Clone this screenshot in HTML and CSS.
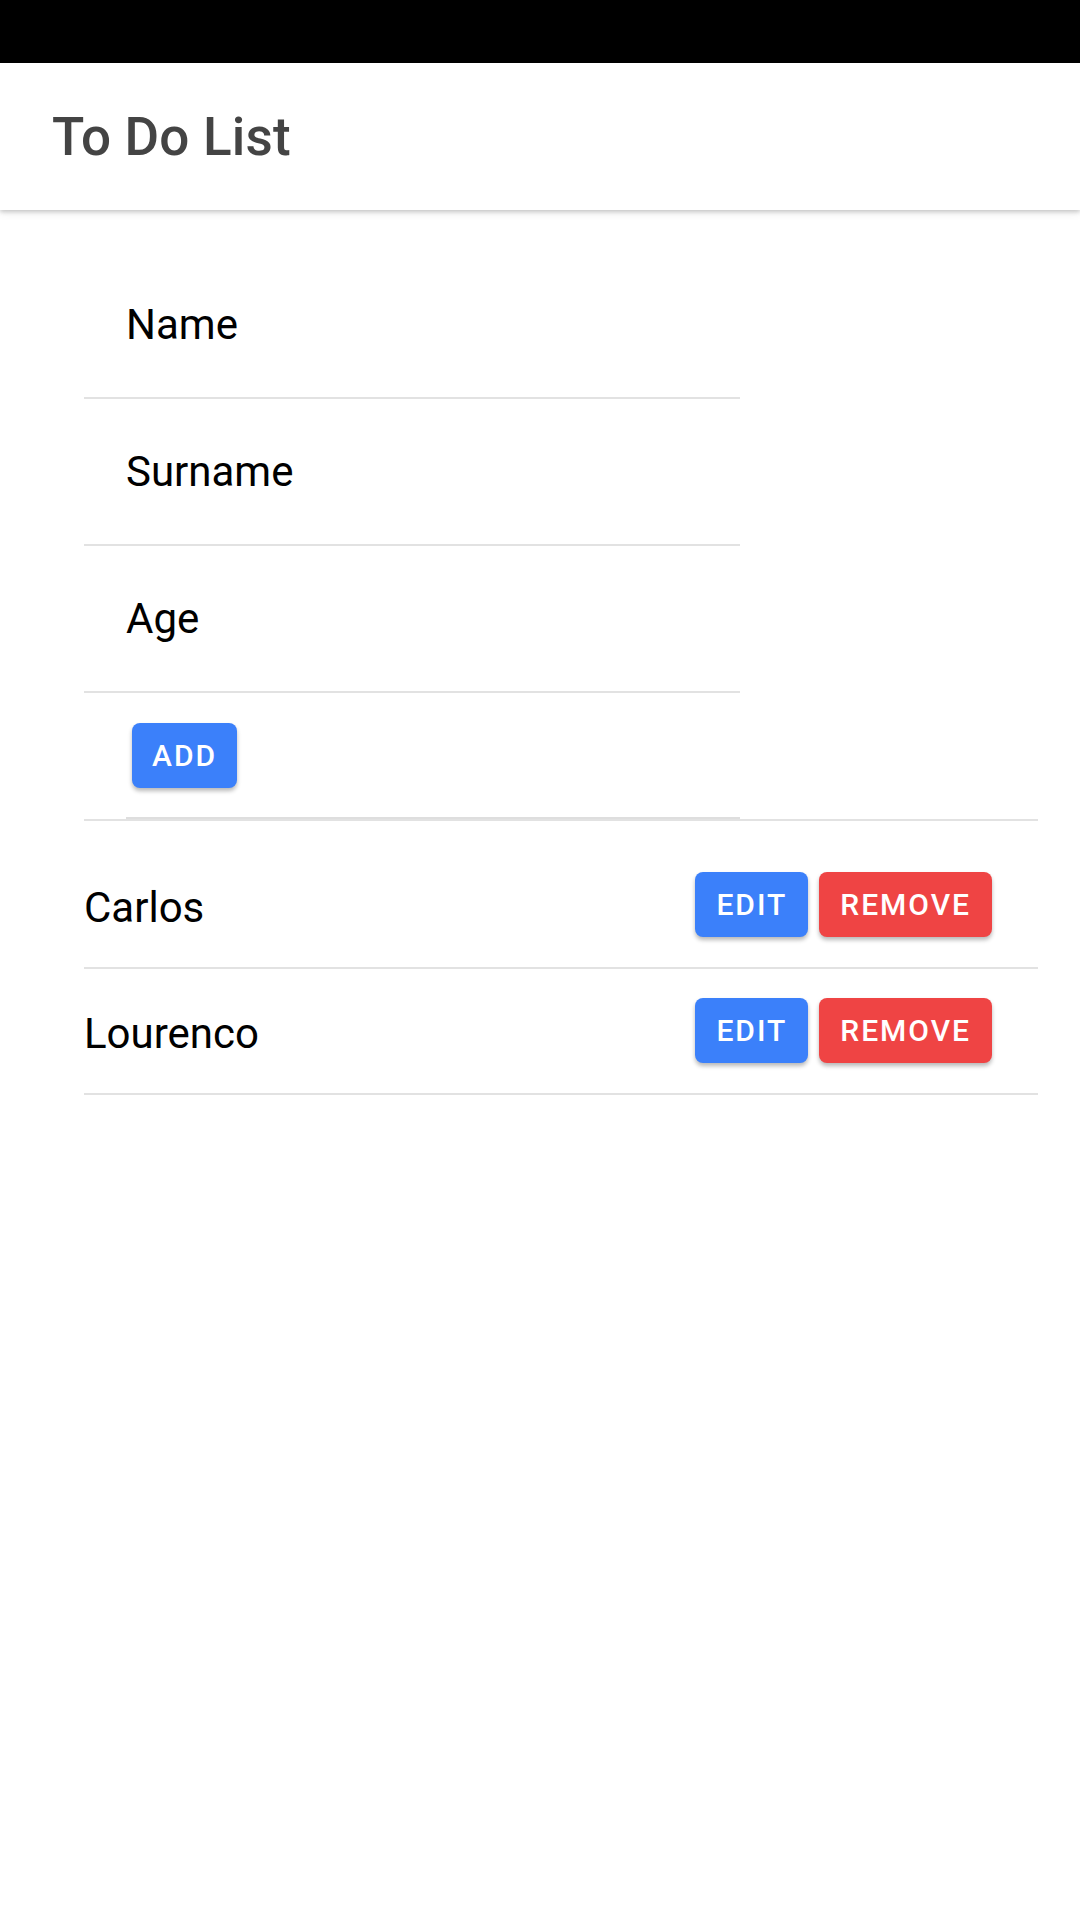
FILE: index.html
```html
<!DOCTYPE html>
<html lang="en">
<head>
<meta charset="utf-8">
<title>To Do List</title>
<link rel="stylesheet" href="styles.css">
</head>
<body>
<div class="screen">
  <div class="statusbar"></div>
  <header class="appbar">
    <h1 class="appbar-title">To Do List</h1>
  </header>
  <main class="content">
    <section class="form">
      <div class="field"><span class="placeholder">Name</span></div>
      <div class="field"><span class="placeholder">Surname</span></div>
      <div class="field"><span class="placeholder">Age</span></div>
      <div class="add-row">
        <button class="btn btn-blue">ADD</button>
      </div>
    </section>
    <ul class="list">
      <li class="item">
        <span class="item-name">Carlos</span>
        <div class="actions">
          <button class="btn btn-blue">EDIT</button>
          <button class="btn btn-red">REMOVE</button>
        </div>
      </li>
      <li class="item">
        <span class="item-name">Lourenco</span>
        <div class="actions">
          <button class="btn btn-blue">EDIT</button>
          <button class="btn btn-red">REMOVE</button>
        </div>
      </li>
    </ul>
  </main>
</div>
</body>
</html>
```

FILE: styles.css
```css
* {
  box-sizing: border-box;
}

html, body {
  margin: 0;
  padding: 0;
  background: #ffffff;
}

body {
  font-family: Roboto, "Noto Sans", "Liberation Sans", sans-serif;
  color: #000;
}

.screen {
  width: 1080px;
  height: 1920px;
  background: #ffffff;
  overflow: hidden;
}

.statusbar {
  height: 63px;
  background: #000;
}

.appbar {
  position: relative;
  z-index: 1;
  height: 147px;
  display: flex;
  align-items: center;
  padding-left: 52px;
  background: #fff;
  box-shadow: 0 2px 4px rgba(0, 0, 0, 0.18), 0 4px 8px rgba(0, 0, 0, 0.06);
}

.appbar-title {
  margin: 0;
  font-size: 53px;
  font-weight: 500;
  color: #444444;
  letter-spacing: 0.2px;
}

.content {
  padding: 42px 42px 0 84px;
}

.form {
  width: 656px;
}

.field {
  height: 147px;
  display: flex;
  align-items: center;
  padding-left: 42px;
  border-bottom: 2px solid #e2e2e2;
}

.placeholder {
  font-size: 42px;
  color: #000;
}

.add-row {
  margin-left: 42px;
  height: 126px;
  display: flex;
  align-items: center;
  padding-left: 6px;
  border-bottom: 2px solid #dedede;
}

.btn {
  height: 65px;
  padding: 0 20px;
  border: none;
  border-radius: 8px;
  font-family: Roboto, "Noto Sans", sans-serif;
  font-size: 30px;
  font-weight: 500;
  letter-spacing: 2px;
  color: #fff;
  box-shadow: 0 3px 4px rgba(0, 0, 0, 0.28);
}

.actions .btn {
  padding: 0 21px;
}

.btn-blue {
  background: #3b80fa;
}

.btn-red {
  background: #ef4444;
}

.list {
  list-style: none;
  margin: 0;
  padding: 22px 0 0 0;
  border-top: 2px solid #e2e2e2;
}

.item {
  display: flex;
  align-items: center;
  justify-content: space-between;
  padding: 29px 46px 30px 0;
  border-bottom: 2px solid #e2e2e2;
}

.item-name {
  font-size: 42px;
  color: #000;
  padding-top: 5px;
}

.actions {
  display: flex;
  gap: 11px;
}
```
